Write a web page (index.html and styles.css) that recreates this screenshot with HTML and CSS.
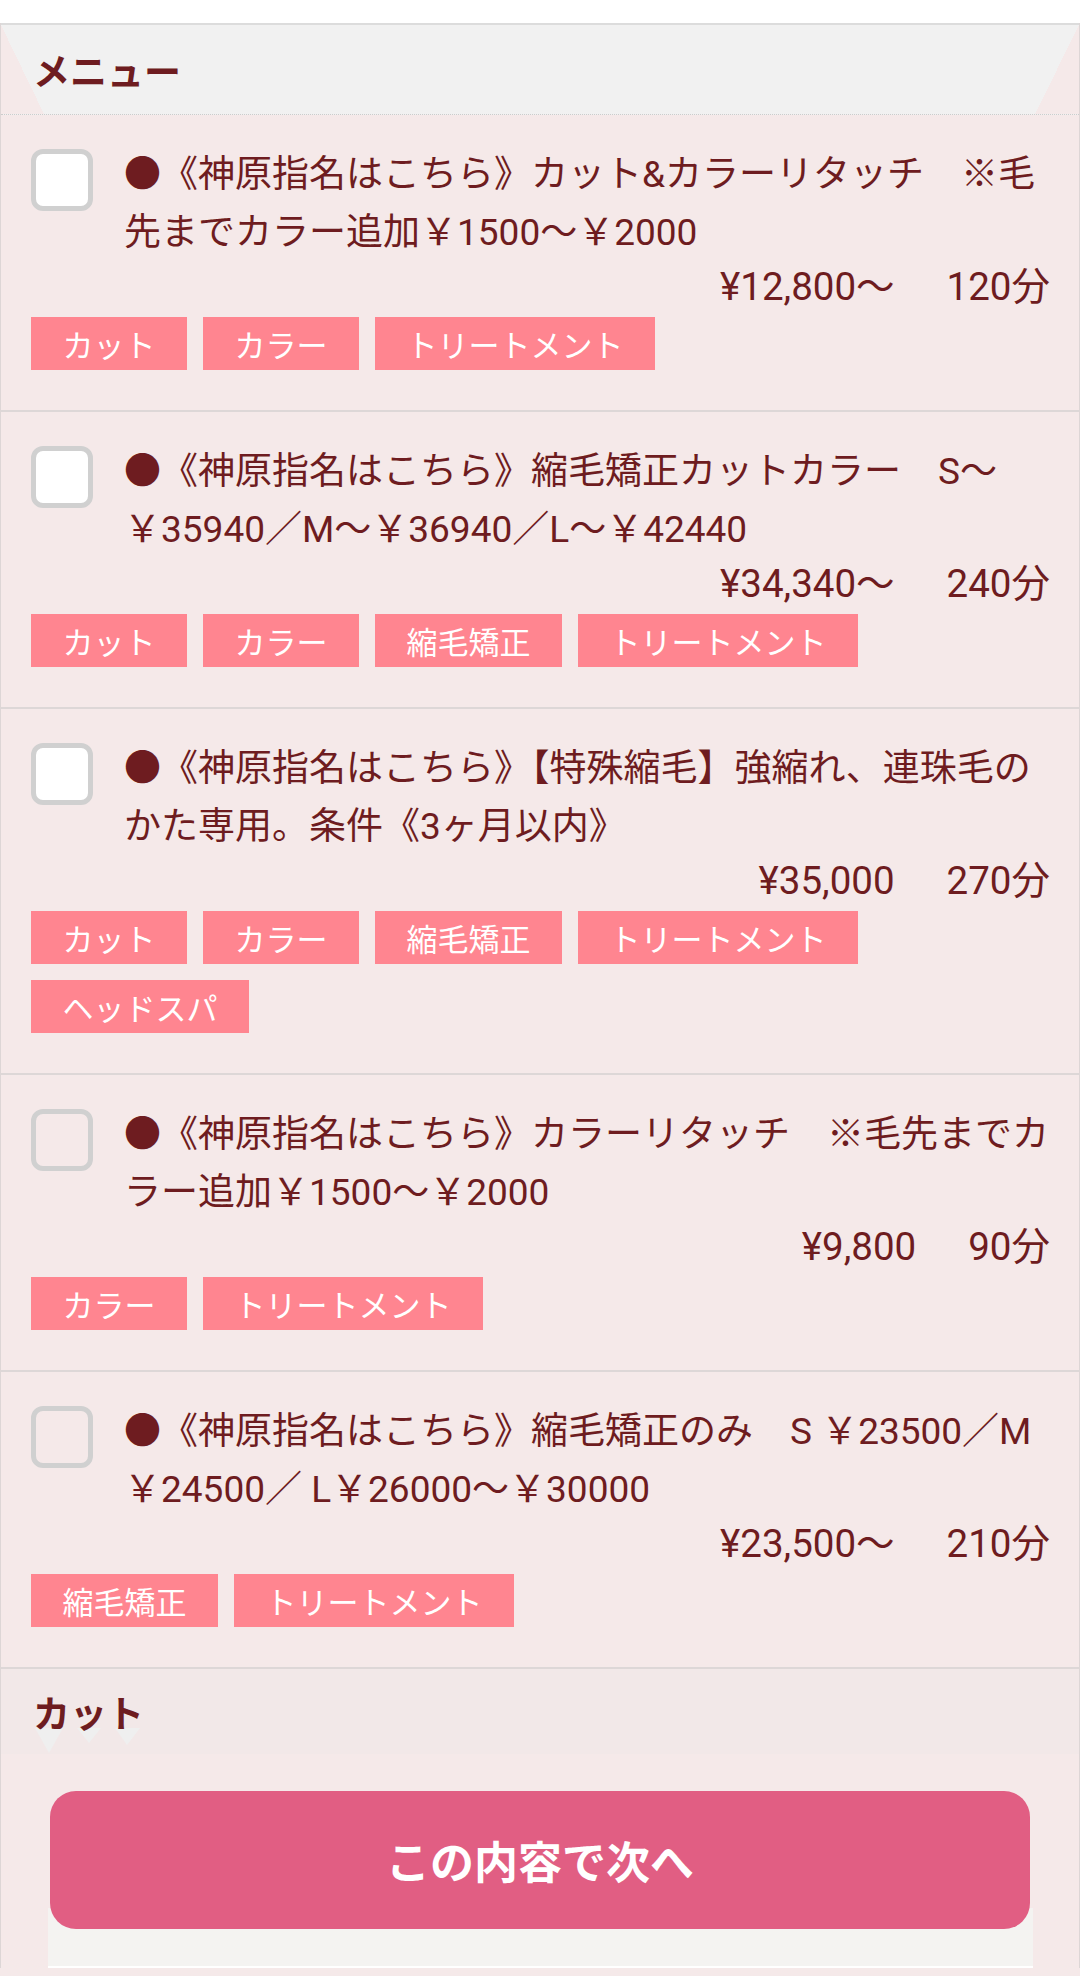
FILE: index.html
```html
<!DOCTYPE html>
<html lang="ja">
<head>
<meta charset="utf-8">
<title>メニュー</title>
<link rel="stylesheet" href="styles.css">
</head>
<body>
<div class="top"></div>
<main class="panel">
  <h2 class="sec-head sec-head--menu">メニュー</h2>
  <ul class="items">
    <li class="item">
      <div class="item-main">
        <span class="check check--filled"></span>
        <p class="title"><span class="dot">●</span>《神原指名はこちら》カット&amp;カラーリタッチ　※毛先までカラー追加￥1500〜￥2000</p>
      </div>
      <div class="meta"><span class="price">¥12,800〜</span><span class="time">120分</span></div>
      <ul class="tags">
        <li class="tag">カット</li>
        <li class="tag">カラー</li>
        <li class="tag">トリートメント</li>
      </ul>
    </li>
    <li class="item">
      <div class="item-main">
        <span class="check check--filled"></span>
        <p class="title"><span class="dot">●</span>《神原指名はこちら》縮毛矯正カットカラー　S〜￥35940／M〜￥36940／L〜￥42440</p>
      </div>
      <div class="meta"><span class="price">¥34,340〜</span><span class="time">240分</span></div>
      <ul class="tags">
        <li class="tag">カット</li>
        <li class="tag">カラー</li>
        <li class="tag">縮毛矯正</li>
        <li class="tag">トリートメント</li>
      </ul>
    </li>
    <li class="item">
      <div class="item-main">
        <span class="check check--filled"></span>
        <p class="title"><span class="dot">●</span>《神原指名はこちら》【特殊縮毛】強縮れ、連珠毛のかた専用。条件《3ヶ月以内》</p>
      </div>
      <div class="meta"><span class="price">¥35,000</span><span class="time">270分</span></div>
      <ul class="tags">
        <li class="tag">カット</li>
        <li class="tag">カラー</li>
        <li class="tag">縮毛矯正</li>
        <li class="tag">トリートメント</li>
        <li class="tag">ヘッドスパ</li>
      </ul>
    </li>
    <li class="item">
      <div class="item-main">
        <span class="check"></span>
        <p class="title"><span class="dot">●</span>《神原指名はこちら》カラーリタッチ　※毛先までカラー追加￥1500〜￥2000</p>
      </div>
      <div class="meta"><span class="price">¥9,800</span><span class="time">90分</span></div>
      <ul class="tags">
        <li class="tag">カラー</li>
        <li class="tag">トリートメント</li>
      </ul>
    </li>
    <li class="item">
      <div class="item-main">
        <span class="check"></span>
        <p class="title"><span class="dot">●</span>《神原指名はこちら》縮毛矯正のみ　S ￥23500／M ￥24500／ L￥26000〜￥30000</p>
      </div>
      <div class="meta"><span class="price">¥23,500〜</span><span class="time">210分</span></div>
      <ul class="tags">
        <li class="tag">縮毛矯正</li>
        <li class="tag">トリートメント</li>
      </ul>
    </li>
  </ul>
  <div class="sec-head sec-head--cut">
    <span class="sec-label">カット</span>
    <svg class="pennants" width="120" height="30" viewBox="0 0 120 30" aria-hidden="true">
      <polygon points="4,2 32,2 18,27" fill="#efefef"/>
      <polygon points="46,2 70,2 58,17" fill="#efefef"/>
      <polygon points="84,2 109,2 96,19" fill="#efefef"/>
    </svg>
  </div>
  <div class="footer">
    <div class="footer-box">
      <button class="next" type="button">この内容で次へ</button>
    </div>
  </div>
</main>
</body>
</html>
```

FILE: styles.css
```css
* {
  box-sizing: border-box;
}

html,
body {
  margin: 0;
  padding: 0;
}

body {
  width: 1080px;
  min-height: 1976px;
  background: #f5e9e9;
  color: #6e1c20;
  font-family: Roboto, "Noto Sans CJK JP", sans-serif;
}

.top {
  height: 23px;
  background: #ffffff;
}

.panel {
  border-left: 1px solid #ddd6d6;
  border-right: 1px solid #ddd6d6;
}

.sec-head {
  margin: 0;
  display: flex;
  align-items: center;
  padding-left: 32px;
  font-family: "Noto Sans CJK JP", sans-serif;
  font-size: 37px;
  font-weight: 700;
  color: #6e1c20;
}

.sec-head--menu {
  height: 92px;
  border-top: 2px solid #dcdcdc;
  border-bottom: 1px dotted #cccccc;
  background:
    linear-gradient(to top right, #f5e9e9 50%, transparent 50%) left bottom / 43px 89px no-repeat,
    linear-gradient(to top left, #f5e9e9 50%, transparent 50%) right bottom / 44px 89px no-repeat,
    #f1f1f1;
}

.items {
  list-style: none;
  margin: 0;
  padding: 0;
}

.item {
  padding: 31px 29px 40px 30px;
  border-bottom: 2px solid #ddd7d7;
}

.item-main {
  display: flex;
  align-items: flex-start;
  gap: 31px;
}

.check {
  flex: none;
  width: 62px;
  height: 62px;
  margin-top: 3px;
  border: 5px solid #d0d0d0;
  border-radius: 12px;
}

.check--filled {
  background: #ffffff;
}

.title {
  flex: 1;
  min-width: 0;
  margin: 0;
  font-size: 37px;
  line-height: 58px;
}

.dot {
  font-family: "Noto Sans CJK JP", sans-serif;
  line-height: 1;
}

.meta {
  display: flex;
  justify-content: flex-end;
  font-size: 38.5px;
  line-height: 50px;
}

.time {
  margin-left: 52px;
}

.tags {
  display: flex;
  flex-wrap: wrap;
  gap: 16px 16px;
  list-style: none;
  margin: 5px 0 0;
  padding: 0;
}

.tag {
  height: 53px;
  padding: 0 31.5px;
  background: #ff8590;
  color: #ffffff;
  font-family: "Noto Sans CJK JP", sans-serif;
  font-size: 31px;
  line-height: 53px;
}

.sec-head--cut {
  position: relative;
  height: 85px;
  background: #f2e8e8;
}

.sec-label {
  position: relative;
  z-index: 1;
}

.pennants {
  position: absolute;
  left: 30px;
  top: 57px;
}

.footer {
  padding: 37px 46px 0 47px;
}

.footer-box {
  padding: 0 3px 37px 2px;
  background: linear-gradient(to bottom, transparent 117px, #f4f3f1 117px);
  border-bottom: 2px solid #ffffff;
}

.next {
  display: block;
  width: 100%;
  height: 138px;
  border: 0;
  border-radius: 26px;
  background: #e15e83;
  color: #ffffff;
  font-family: "Noto Sans CJK JP", sans-serif;
  font-size: 44px;
  font-weight: 700;
}
```
